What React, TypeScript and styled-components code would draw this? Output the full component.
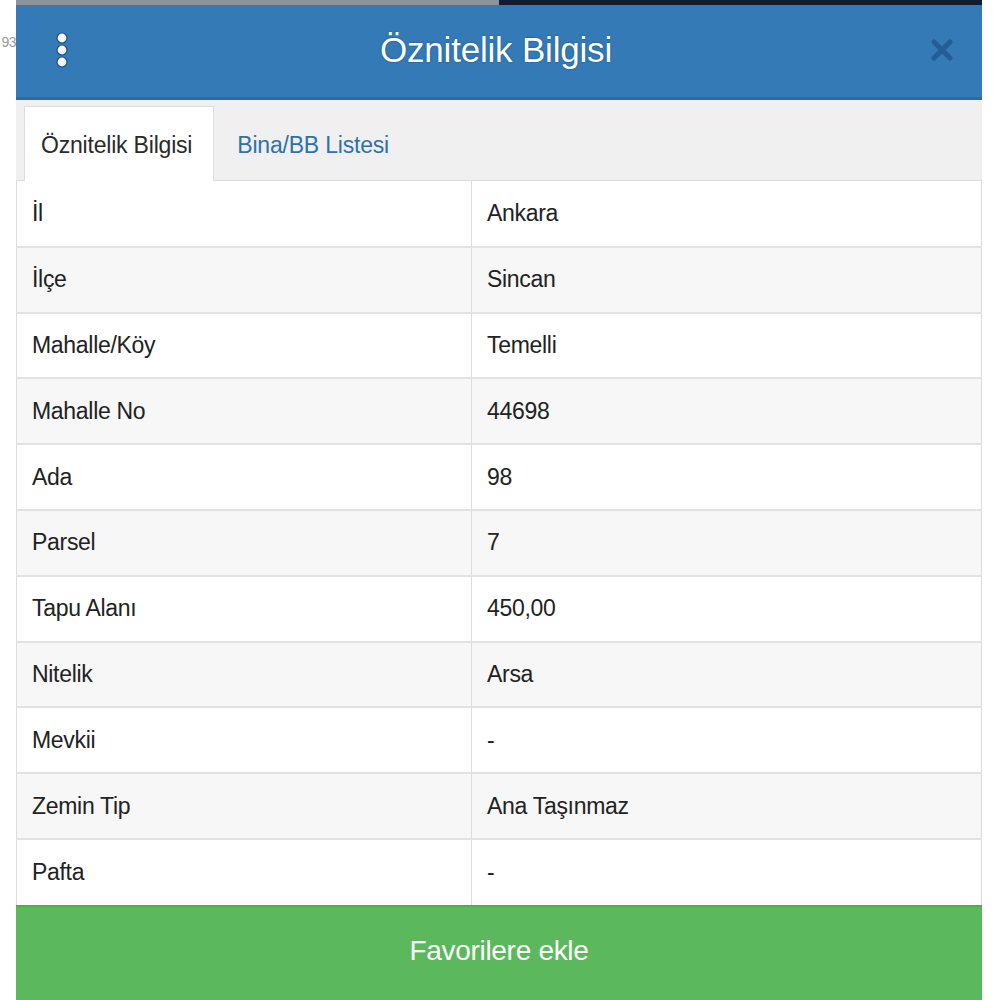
import { createGlobalStyle, styled } from "styled-components";

const GlobalStyle = createGlobalStyle`
  html, body {
    margin: 0;
    padding: 0;
    background: #ffffff;
    font-family: "Liberation Sans", Arial, sans-serif;
  }
  * {
    box-sizing: border-box;
  }
`;

const rows: [string, string][] = [
  ["İl", "Ankara"],
  ["İlçe", "Sincan"],
  ["Mahalle/Köy", "Temelli"],
  ["Mahalle No", "44698"],
  ["Ada", "98"],
  ["Parsel", "7"],
  ["Tapu Alanı", "450,00"],
  ["Nitelik", "Arsa"],
  ["Mevkii", "-"],
  ["Zemin Tip", "Ana Taşınmaz"],
  ["Pafta", "-"],
];

export default function App() {
  return (
    <>
      <GlobalStyle />
      <Page>
        <Gutter>
          <GutterText>93</GutterText>
        </Gutter>
        <Panel>
          <Backdrop>
            <BackdropPart $tone="#8d939b" />
            <BackdropPart $tone="#0f1c34" />
          </Backdrop>
          <Header>
            <MenuButton aria-label="menu">
              <svg width="20" height="36" viewBox="0 0 20 36">
                {[6, 18, 30].map((cy) => (
                  <circle
                    key={cy}
                    cx="10"
                    cy={cy}
                    r="5"
                    fill="#f4f8fc"
                    stroke="#1d4f80"
                    strokeWidth="1.2"
                  />
                ))}
              </svg>
            </MenuButton>
            <Title>Öznitelik Bilgisi</Title>
            <CloseButton aria-label="close">
              <svg width="24" height="24" viewBox="0 0 24 24">
                <path
                  d="M4 4 L20 20 M20 4 L4 20"
                  stroke="#235d93"
                  strokeWidth="5"
                  strokeLinecap="round"
                />
              </svg>
            </CloseButton>
          </Header>
          <TabBar>
            <Tab $active>Öznitelik Bilgisi</Tab>
            <Tab>Bina/BB Listesi</Tab>
          </TabBar>
          <Table>
            <tbody>
              {rows.map(([label, value], i) => (
                <Row key={label} $striped={i % 2 === 1}>
                  <Cell $first>{label}</Cell>
                  <Cell>{value}</Cell>
                </Row>
              ))}
            </tbody>
          </Table>
          <FavButton>Favorilere ekle</FavButton>
        </Panel>
      </Page>
    </>
  );
}

const Page = styled.div`
  display: flex;
  width: 1000px;
  height: 1000px;
  overflow: hidden;
  background: #ffffff;
`;

const Gutter = styled.div`
  width: 16px;
  flex-shrink: 0;
  overflow: hidden;
  display: flex;
  justify-content: flex-end;
  padding-top: 33px;
`;

const GutterText = styled.span`
  font-size: 14px;
  color: #9a9a9a;
  line-height: 18px;
  height: 18px;
  letter-spacing: -0.5px;
`;

const Panel = styled.div`
  width: 966px;
  flex-shrink: 0;
  display: block;
`;

const Backdrop = styled.div`
  display: flex;
  height: 5px;
`;

const BackdropPart = styled.div<{ $tone: string }>`
  flex: 1;
  background: ${(p) => p.$tone};
`;

const Header = styled.div`
  height: 95px;
  display: flex;
  align-items: center;
  justify-content: space-between;
  padding: 0 28px 2px 36px;
  background: #337ab7;
  border-bottom: 3px solid #2b6aa3;
`;

const MenuButton = styled.div`
  width: 20px;
  display: flex;
  align-items: center;
`;

const Title = styled.h1`
  margin: 0 0 0 -10px;
  font-size: 35px;
  font-weight: normal;
  color: #ffffff;
  letter-spacing: -0.2px;
  text-shadow: 0 0 2px #1d4f80;
`;

const CloseButton = styled.div`
  width: 24px;
  display: flex;
  align-items: center;
`;

const TabBar = styled.div`
  height: 81px;
  display: flex;
  align-items: flex-end;
  padding-left: 8px;
  background: #f0f0f0;
  border-bottom: 1px solid #dcdcdc;
`;

const Tab = styled.div<{ $active?: boolean }>`
  height: 75px;
  display: flex;
  align-items: center;
  padding: 2px ${(p) => (p.$active ? "21px" : "22px")} 0
    ${(p) => (p.$active ? "16px" : "22px")};
  font-size: 23px;
  color: ${(p) => (p.$active ? "#2a2a2a" : "#2f71ad")};
  background: ${(p) => (p.$active ? "#ffffff" : "transparent")};
  border: 1px solid ${(p) => (p.$active ? "#dddddd" : "transparent")};
  border-bottom: none;
  margin-bottom: -1px;
  letter-spacing: -0.2px;
`;

const Table = styled.table`
  width: 966px;
  border-collapse: collapse;
  table-layout: fixed;
  border-left: 1px solid #dddddd;
  border-right: 1px solid #dddddd;
`;

const Row = styled.tr<{ $striped: boolean }>`
  height: 65.8px;
  background: ${(p) => (p.$striped ? "#f7f7f7" : "#ffffff")};
  border-top: 2px solid #e2e2e2;
  &:first-child {
    border-top: none;
  }
`;

const Cell = styled.td<{ $first?: boolean }>`
  width: ${(p) => (p.$first ? "455px" : "auto")};
  padding: 0 15px;
  font-size: 23px;
  color: #222222;
  letter-spacing: -0.3px;
  border-right: ${(p) => (p.$first ? "1px solid #dddddd" : "none")};
  vertical-align: middle;
`;

const FavButton = styled.div`
  height: 100px;
  display: flex;
  justify-content: center;
  padding-top: 28px;
  background: #5cb85c;
  border-top: 2px solid #4cae4c;
  color: #ffffff;
  font-size: 28px;
  letter-spacing: -0.3px;
`;
